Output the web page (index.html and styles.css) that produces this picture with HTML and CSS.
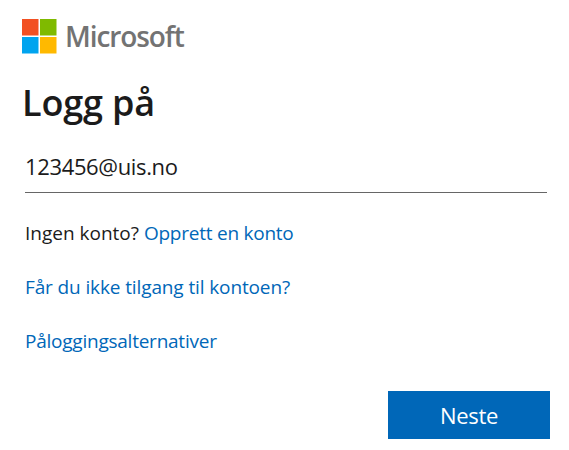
FILE: index.html
```html
<!DOCTYPE html>
<html lang="no">
  <head>
    <meta charset="UTF-8" />
    <meta name="viewport" content="width=device-width, initial-scale=1.0" />
    <title>Logg på</title>
    <link rel="stylesheet" href="styles.css" />
  </head>
  <body>
    <form class="login">
      <div class="brand">
        <svg class="logo" viewBox="0 0 35 35" aria-hidden="true">
          <rect width="16.5" height="16.5" fill="#f25022" />
          <rect x="18" width="16.5" height="16.5" fill="#7fba00" />
          <rect y="18" width="16.5" height="16.5" fill="#00a4ef" />
          <rect x="18" y="18" width="16.5" height="16.5" fill="#ffb900" />
        </svg>
        <span class="brand-name">Microsoft</span>
      </div>
      <h1>Logg på</h1>
      <input class="email" type="text" value="123456@uis.no" aria-label="E-post" />
      <p>Ingen konto? <a class="create" href="#">Opprett en konto</a></p>
      <p><a class="access" href="#">Får du ikke tilgang til kontoen?</a></p>
      <p><a class="options" href="#">Påloggingsalternativer</a></p>
      <div class="actions">
        <button class="btn" type="button">Neste</button>
      </div>
    </form>
  </body>
</html>
```
FILE: styles.css
```css
* {
  box-sizing: border-box;
}

body {
  margin: 0;
  background: #fff;
  color: #1b1b1b;
  font-family: "Segoe UI", "Open Sans", "Noto Sans", sans-serif;
}

.login {
  padding: 19px 19px 0 22px;
}

.brand {
  display: flex;
  align-items: center;
  gap: 8px;
  height: 35px;
}

.logo {
  width: 35px;
  height: 35px;
}

.brand-name {
  color: #737373;
  font-size: 28px;
  font-weight: 600;
  line-height: 35px;
  letter-spacing: -1.1px;
}

h1 {
  margin: 26px 0 0;
  font-size: 36px;
  font-weight: 600;
  line-height: 46px;
  letter-spacing: -0.15px;
}

.email {
  display: block;
  width: 522px;
  height: 51px;
  margin: 16px 0 0 3px;
  padding: 0 0 2px;
  border: 0;
  border-bottom: 1px solid #666;
  outline: none;
  color: #1b1b1b;
  font-family: inherit;
  font-size: 22px;
  letter-spacing: -0.36px;
}

p {
  margin: 26px 0 0 3px;
  font-size: 19px;
  line-height: 28px;
}

a {
  color: #0067b8;
  text-decoration: none;
}

.create,
.options {
  letter-spacing: -0.24px;
}

.access {
  letter-spacing: -0.12px;
}

.actions {
  display: flex;
  justify-content: flex-end;
  margin-top: 36px;
}

.btn {
  width: 162px;
  height: 48px;
  padding: 0;
  border: 0;
  background: #0067b8;
  color: #fff;
  font-family: inherit;
  font-size: 22px;
  letter-spacing: -0.3px;
}
```
